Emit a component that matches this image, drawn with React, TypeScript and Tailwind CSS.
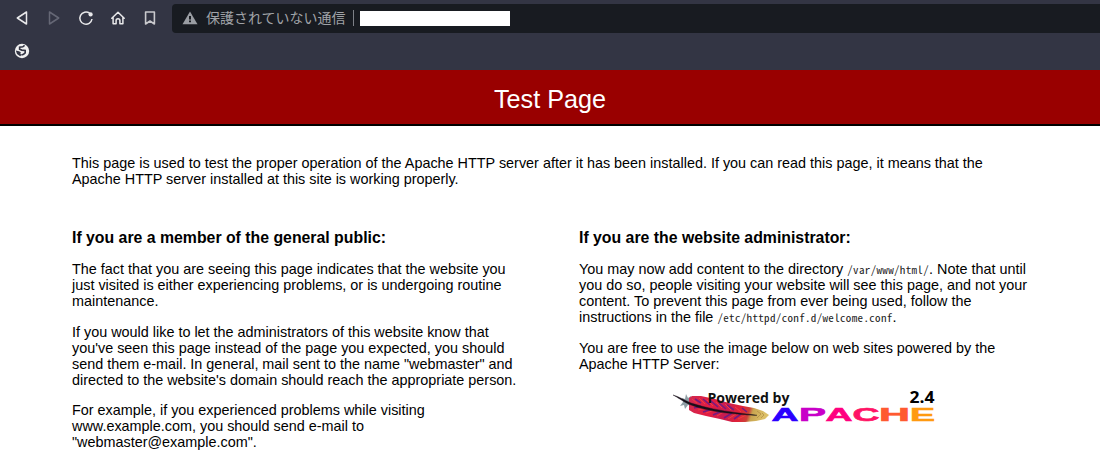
interface Letter {
  char: string;
  x: number;
  width: number;
  color: string;
}

const apacheLetters: Letter[] = [
  { char: "A", x: 100.5, width: 27, color: "#2a00ff" },
  { char: "P", x: 128, width: 27, color: "#c800c8" },
  { char: "A", x: 154.5, width: 27, color: "#ff0080" },
  { char: "C", x: 181.5, width: 27, color: "#ff1466" },
  { char: "H", x: 208, width: 31, color: "#ff5a30" },
  { char: "E", x: 239, width: 25, color: "#ff9a10" },
];

function BrowserChrome() {
  return (
    <div className="h-[70px] bg-[#333544]">
      <div className="flex h-9 items-center pl-[14px] text-[#e8e8ea]">
        <svg width="16" height="16" viewBox="0 0 16 16" fill="none" stroke="currentColor" strokeWidth="1.5" strokeLinejoin="round">
          <path d="M12.5 2v12L3.3 8z" />
        </svg>
        <svg className="ml-4 text-[#656775]" width="16" height="16" viewBox="0 0 16 16" fill="none" stroke="currentColor" strokeWidth="1.5" strokeLinejoin="round">
          <path d="M3.5 2v12l9.2-6z" />
        </svg>
        <svg className="ml-4" width="16" height="16" viewBox="0 0 16 16" fill="none" stroke="currentColor" strokeWidth="1.5">
          <path d="M11.6 3.2A6.1 6.1 0 1 0 14 9" />
          <circle cx="12.6" cy="4.4" r="2.1" fill="currentColor" stroke="none" />
        </svg>
        <svg className="ml-4" width="16" height="16" viewBox="0 0 16 16" fill="none" stroke="currentColor" strokeWidth="1.5" strokeLinejoin="round" strokeLinecap="round">
          <path d="M1.8 8.2 8 2.2l6.2 6M3.1 7.5v6.3h3V10.6a1.9 1.9 0 0 1 3.8 0v3.2h3V7.5" />
        </svg>
        <svg className="ml-4 text-[#c9c9cd]" width="16" height="16" viewBox="0 0 16 16" fill="none" stroke="currentColor" strokeWidth="1.6" strokeLinejoin="round">
          <path d="M3.6 2h8.8v12L8 11l-4.4 3z" />
        </svg>

        <div className="ml-[14px] mt-px flex h-[29px] flex-1 items-center rounded-l bg-[#181b21] pl-[10px]">
          <svg className="-mt-px" width="16" height="14" viewBox="0 0 16 14">
            <path d="M8 .5 15.5 13.2H.5z" fill="#9a9da3" />
            <path d="M7 5h2v3.4H7zM7 9.5h2v1.8H7z" fill="#181b21" />
          </svg>
          <span className="-mt-[3px] ml-2 whitespace-nowrap font-['Noto_Sans_CJK_JP',sans-serif] text-[14px] leading-5 text-[#a0a3a8]">
            保護されていない通信
          </span>
          <div className="-mt-px ml-[7px] h-4 w-px bg-[#7d8087]" />
          <div className="ml-[6px] h-[15px] w-[150px] bg-white" />
        </div>
      </div>

      <div className="pl-[14px] pt-[7px]">
        <svg width="16" height="16" viewBox="0 0 16 16">
          <circle cx="8" cy="8" r="7.2" fill="#f1f1f1" />
          <path
            d="M10.6 2.4 8.8 3.8 5.6 4.2v2l2.2.9 3.4.4v2.3l-1.6 1.4-2.2.8"
            fill="none"
            stroke="#333544"
            strokeWidth="1.6"
          />
          <path d="M1.8 7.4 5 8.2l1.8 1-.4 1.6 1 1.2-1.2 1.2L3 11z" fill="#333544" />
        </svg>
      </div>
    </div>
  );
}

function PoweredByApache() {
  return (
    <svg
      className="mx-auto mt-[11px] block"
      width="266"
      height="48"
      viewBox="0 -8 266 48"
      role="img"
      aria-label="Powered by Apache"
    >
      <defs>
        <linearGradient id="feather" x1="0" x2="1" y1="0" y2="0.1">
          <stop offset="0" stopColor="#d02a50" />
          <stop offset="0.3" stopColor="#e31c42" />
          <stop offset="0.5" stopColor="#c81c50" />
          <stop offset="0.7" stopColor="#e02238" />
          <stop offset="0.8" stopColor="#cc4038" />
          <stop offset="0.85" stopColor="#c9a550" />
          <stop offset="1" stopColor="#dcc068" />
        </linearGradient>
      </defs>

      {/* plume */}
      <path d="M15 3l-1 5-3-1 1 4-3 4 4-1 1 4 3-4 3 1V5l-3 2z" fill="#8f9ea5" />
      <path
        d="M18 7l3-2 9 0 14 3 14 4 14 3 11 2 9 3 6 4-4 4-9 2-11 1-13 0-12-3-14-3-12-3-5-3z"
        fill="url(#feather)"
      />
      <path
        d="M24 8l6 4M32 8l7 6M40 10l7 6M48 12l7 6M56 14l7 5M23 17l7-2M32 21l9-3M42 24l9-4M53 27l8-5M63 28l7-5M71 17l5 4"
        fill="none"
        stroke="#751b80"
        strokeWidth="1.6"
      />
      <path
        d="M21 8l5 4M28 7l6 6M36 9l6 6M45 11l6 6M54 13l6 6M64 16l6 5M27 19l8-2M35 22l9-3M46 25l8-5M57 28l8-5M67 28l8-4"
        fill="none"
        stroke="#f13b42"
        strokeWidth="1"
      />
      <path d="M86 20l4 3-4 4M91 22l2 2-3 3" fill="none" stroke="#a8813c" strokeWidth="0.6" />
      <path
        d="M2 4c6 1.500 11 5 18 8 15 5 30 7.500 44 9.500 8 1 15 1.800 22 2.800-8 0-20-1-36-3-12-2-22-4-32-8C11 10 7 6.500 2 4z"
        fill="#170e19"
        stroke="#170e19"
        strokeWidth="0.4"
      />

      <text x="36.5" y="11.5" textLength="82" lengthAdjust="spacingAndGlyphs" className="fill-[#111111] font-['Open_Sans',sans-serif] text-[14px] font-bold">
        Powered by
      </text>
      <text x="238.5" y="11.5" textLength="25" lengthAdjust="spacingAndGlyphs" className="fill-black font-['Open_Sans',sans-serif] text-[15.5px] font-bold">
        2.4
      </text>
      {apacheLetters.map((letter) => (
        <text
          key={letter.x}
          x={letter.x}
          y="30"
          textLength={letter.width}
          lengthAdjust="spacingAndGlyphs"
          fill={letter.color}
          stroke={letter.color}
          strokeWidth="0.6"
          className="font-['Liberation_Sans',sans-serif] text-[18.5px] font-bold"
        >
          {letter.char}
        </text>
      ))}
    </svg>
  );
}

export default function App() {
  return (
    <div className="h-[470px] overflow-hidden bg-white font-['Liberation_Sans',Arial,sans-serif] text-[14.4px] leading-4 text-black">
      <BrowserChrome />

      <h1 className="h-14 border-b-2 border-black bg-[#990000] pt-[15px] text-center text-[25.2px] font-normal leading-[29px] text-white">
        Test Page
      </h1>

      <div className="px-[72px] pt-[29px]">
        <p>
          This page is used to test the proper operation of the Apache HTTP
          server after it has been installed. If you can read this page, it
          means that the Apache HTTP server installed at this site is working
          properly.
        </p>

        <div className="mt-[42px] flex justify-between">
          <div className="w-[449px] space-y-[14.4px]">
            <h2 className="text-[15.84px] font-bold leading-[18px]">
              If you are a member of the general public:
            </h2>

            <p>
              The fact that you are seeing this page indicates that the website
              you just visited is either experiencing problems, or is
              undergoing routine maintenance.
            </p>

            <p>
              If you would like to let the administrators of this website know
              that you've seen this page instead of the page you expected, you
              should send them e-mail. In general, mail sent to the name
              "webmaster" and directed to the website's domain should reach the
              appropriate person.
            </p>

            <p>
              For example, if you experienced problems while visiting
              www.example.com, you should send e-mail to
              "webmaster@example.com".
            </p>
          </div>

          <div className="w-[449px]">
            <div className="space-y-[14.4px]">
              <h2 className="text-[15.84px] font-bold leading-[18px]">
                If you are the website administrator:
              </h2>

              <p>
                You may now add content to the directory{" "}
                <code className="font-['Noto_Sans_Mono_CJK_JP','Liberation_Mono',monospace] text-[11px] leading-none tracking-[0.34px] text-[#222222]">
                  /var/www/html/
                </code>
                . Note that until you do so, people visiting your website will
                see this page, and not your content. To prevent this page from
                ever being used, follow the instructions in the file{" "}
                <code className="font-['Noto_Sans_Mono_CJK_JP','Liberation_Mono',monospace] text-[11px] leading-none tracking-[0.34px] text-[#222222]">
                  /etc/httpd/conf.d/welcome.conf
                </code>
                .
              </p>

              <p>
                You are free to use the image below on web sites powered by the
                Apache HTTP Server:
              </p>
            </div>

            <PoweredByApache />
          </div>
        </div>
      </div>
    </div>
  );
}
